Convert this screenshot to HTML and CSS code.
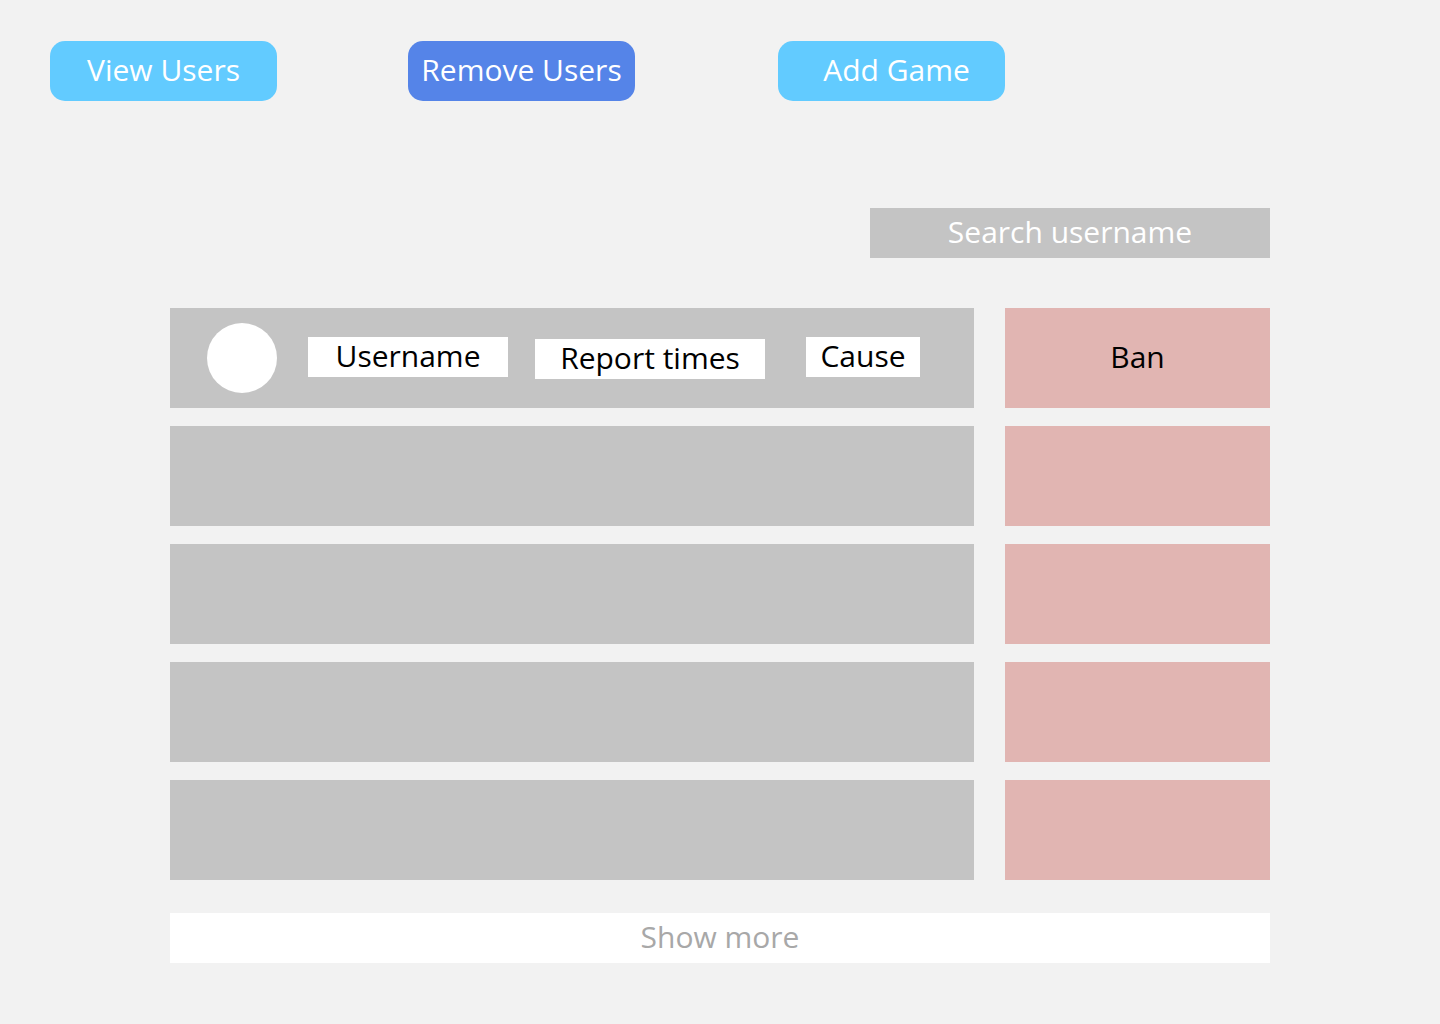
FILE: index.html
```html
<!DOCTYPE html>
<html>
<head>
<meta charset="utf-8">
<link rel="stylesheet" href="styles.css">
</head>
<body>
<nav class="nav">
  <button class="btn btn-light btn-view">View Users</button>
  <button class="btn btn-dark btn-remove">Remove Users</button>
  <button class="btn btn-light btn-add">Add Game</button>
</nav>
<main class="main">
  <div class="search-row">
    <div class="search">Search username</div>
  </div>
  <div class="list">
    <div class="row">
      <div class="user">
        <div class="avatar"></div>
        <div class="tag tag-user">Username</div>
        <div class="tag tag-report">Report times</div>
        <div class="tag tag-cause">Cause</div>
      </div>
      <div class="ban">Ban</div>
    </div>
    <div class="row"><div class="user"></div><div class="ban"></div></div>
    <div class="row"><div class="user"></div><div class="ban"></div></div>
    <div class="row"><div class="user"></div><div class="ban"></div></div>
    <div class="row"><div class="user"></div><div class="ban"></div></div>
  </div>
  <div class="more">Show more</div>
</main>
</body>
</html>
```
FILE: styles.css
```css
* { box-sizing: border-box; }
html, body { margin: 0; padding: 0; }
body {
  background: #f2f2f2;
  font-family: "Open Sans", Lato, sans-serif;
  font-size: 30px;
  width: 1440px;
  height: 1024px;
  overflow: hidden;
}
.nav {
  display: flex;
  padding: 41px 0 0 50px;
}
.btn {
  width: 227px;
  height: 60px;
  border: none;
  border-radius: 15px;
  color: #fff;
  font-family: inherit;
  font-size: 30px;
  display: flex;
  align-items: center;
  justify-content: center;
  padding: 0 0 4px;
  white-space: nowrap;
}
.btn-light { background: #62cbff; }
.btn-dark { background: #5584e8; }
.btn-remove { margin-left: 131px; }
.btn-add { margin-left: 143px; padding-left: 10px; }
.main {
  width: 1100px;
  margin: 107px 0 0 170px;
}
.search-row {
  display: flex;
  justify-content: flex-end;
}
.search {
  width: 400px;
  height: 50px;
  background: #c4c4c4;
  color: #fff;
  display: flex;
  align-items: center;
  justify-content: center;
  padding-bottom: 3px;
}
.list {
  margin-top: 50px;
  display: flex;
  flex-direction: column;
  gap: 18px;
}
.row {
  display: flex;
  gap: 31px;
  height: 100px;
}
.user {
  width: 804px;
  background: #c4c4c4;
  display: flex;
  align-items: center;
}
.avatar {
  width: 70px;
  height: 70px;
  border-radius: 50%;
  background: #fff;
  margin-left: 37px;
  flex: none;
}
.tag {
  background: #fff;
  color: #000;
  height: 40px;
  display: flex;
  align-items: center;
  justify-content: center;
  flex: none;
  padding-bottom: 4px;
  white-space: nowrap;
}
.tag-user { width: 200px; margin-left: 31px; margin-top: -2px; }
.tag-report { width: 230px; margin-left: 27px; margin-top: 2px; }
.tag-cause { width: 114px; margin-left: 41px; margin-top: -2px; }
.ban {
  width: 265px;
  background: #e1b5b2;
  color: #000;
  display: flex;
  align-items: center;
  justify-content: center;
  padding-bottom: 4px;
}
.more {
  margin-top: 33px;
  height: 50px;
  background: #fff;
  color: #a8a8a8;
  display: flex;
  align-items: center;
  justify-content: center;
  padding-bottom: 3px;
}
```
